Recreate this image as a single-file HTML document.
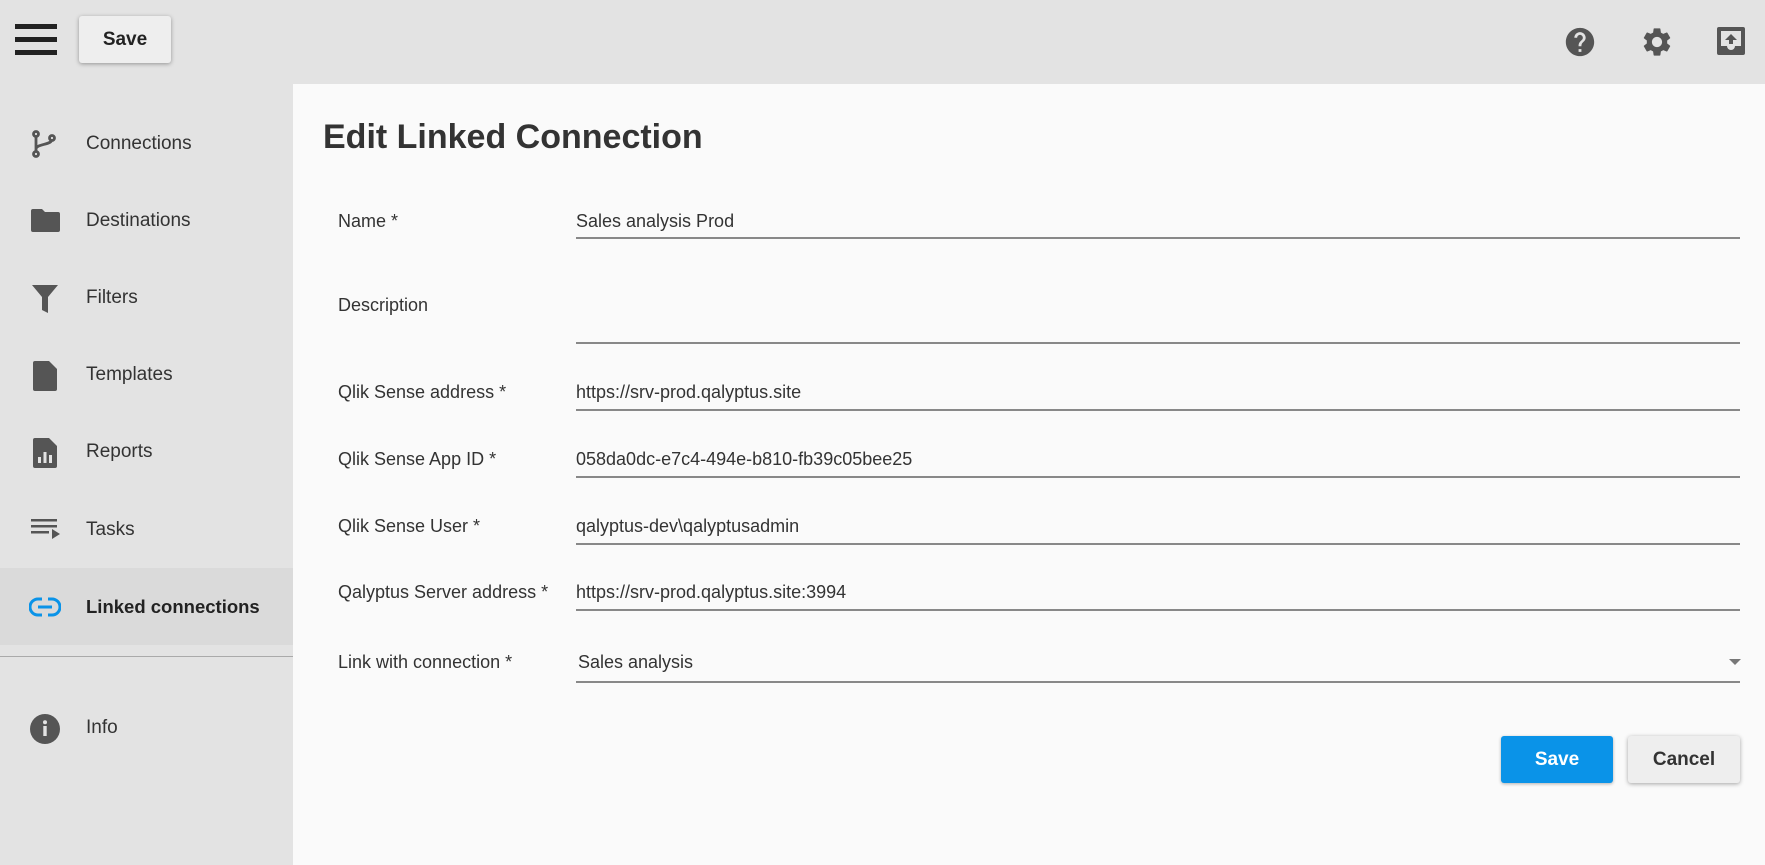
<!DOCTYPE html>
<html><head><meta charset="utf-8"><style>
*{margin:0;padding:0;box-sizing:border-box}
body{width:1765px;height:865px;position:relative;overflow:hidden;background:#fafafa;font-family:"Liberation Sans",Arial,sans-serif;color:#333}
.a{position:absolute}
.top{left:0;top:0;width:1765px;height:84px;background:#e3e3e3}
.side{left:0;top:84px;width:293px;height:781px;background:#e3e3e3}
.ham{left:15px;width:42px;height:5px;background:#222}
.btn{display:flex;align-items:center;justify-content:center;font-weight:bold;font-size:19px;border-radius:3px}
.nav{left:86px;font-size:19px;color:#333;line-height:22px}
.ic{left:29px}
.lbl{left:338px;font-size:18px;line-height:22px;color:#333}
.val{left:576px;font-size:18px;line-height:22px;color:#333}
.ul{left:576px;width:1164px;height:2px;background:#888}
</style></head><body>
<div class="a top"></div>
<div class="a side"></div>
<div class="a ham" style="top:24px"></div>
<div class="a ham" style="top:37px"></div>
<div class="a ham" style="top:50px"></div>
<div class="a btn" style="left:79px;top:16px;width:92px;height:47px;background:#eee;box-shadow:0 1px 4px rgba(0,0,0,.35);color:#222">Save</div>

<svg class="a" style="left:1563px;top:25px" width="34" height="34" viewBox="0 0 24 24"><path fill="#555" d="M12 2C6.480 2 2 6.48 2 12s4.48 10 10 10 10-4.48 10-10S17.52 2 12 2zm1 17h-2v-2h2v2zm2.07-7.75l-.9.92C13.45 12.9 13 13.5 13 15h-2v-.5c0-1.1.45-2.1 1.17-2.83l1.24-1.260c.37-.36.59-.86.59-1.41 0-1.1-.9-2-2-2s-2 .9-2 2H8c0-2.21 1.79-4 4-4s4 1.79 4 4c0 .88-.36 1.68-.93 2.25z"/></svg>
<svg class="a" style="left:1640px;top:25px" width="34" height="34" viewBox="0 0 24 24"><path fill="#555" d="M19.14 12.94c.04-.3.06-.61.06-.94 0-.32-.02-.64-.07-.94l2.03-1.58a.49.49 0 0 0 .12-.61l-1.92-3.32a.488.488 0 0 0-.59-.22l-2.39.96c-.5-.38-1.03-.7-1.62-.94l-.36-2.54a.484.484 0 0 0-.48-.41h-3.84c-.24 0-.43.17-.47.41l-.36 2.54c-.59.24-1.13.57-1.62.94l-2.390-.96c-.22-.08-.47 0-.59.22L2.74 8.87c-.12.21-.08.47.12.61l2.03 1.58c-.05.3-.09.63-.09.94s.02.64.07.94l-2.03 1.58a.49.49 0 0 0-.12.61l1.92 3.32c.12.22.37.29.59.22l2.39-.96c.5.38 1.03.7 1.62.94l.36 2.54c.05.24.24.41.48.41h3.84c.24 0 .44-.17.47-.41l.36-2.54c.59-.24 1.13-.56 1.62-.94l2.39.96c.22.08.47 0 .59-.22l1.92-3.32c.12-.22.07-.47-.12-.61l-2.01-1.58zM12 15.6c-1.98 0-3.6-1.62-3.6-3.6s1.62-3.6 3.6-3.6 3.6 1.62 3.6 3.6-1.62 3.6-3.6 3.6z"/></svg>
<svg class="a" style="left:1716px;top:26px" width="30" height="30" viewBox="0 0 30 30"><path fill="#555" d="M3 1h24a2 2 0 0 1 2 2v24a2 2 0 0 1-2 2H3a2 2 0 0 1-2-2V3a2 2 0 0 1 2-2zm2 4v15h6a4 4 0 0 0 8 0h6V5z"/><path fill="#555" d="M15 8l-6 6h4v4h4v-4h4z"/></svg>

<svg class="a ic" style="top:129px" width="30" height="30" viewBox="0 0 30 30"><g fill="none" stroke="#555" stroke-width="2.8"><circle cx="7" cy="5" r="2.5"/><circle cx="7" cy="25" r="2.5"/><circle cx="23" cy="9" r="2.5"/><path d="M7 7.5v15M7 20c0-5 14-4 15.5-8.5"/></g></svg>
<svg class="a ic" style="top:207px" width="32" height="28" viewBox="0 0 32 28"><path fill="#555" d="M2 4a2 2 0 0 1 2-2h9l3 3h13a2 2 0 0 1 2 2v16a2 2 0 0 1-2 2H4a2 2 0 0 1-2-2z"/></svg>
<svg class="a ic" style="top:284px" width="32" height="32" viewBox="0 0 32 32"><path fill="#555" d="M3 1h26l-10 12v16l-6-3V13z"/></svg>
<svg class="a ic" style="top:360px" width="32" height="32" viewBox="0 0 32 32"><path fill="#555" d="M6 1h14l8 8v20a2 2 0 0 1-2 2H6a2 2 0 0 1-2-2V3a2 2 0 0 1 2-2z"/></svg>
<svg class="a ic" style="top:437px" width="32" height="32" viewBox="0 0 32 32"><path fill="#555" d="M6 1h14l8 8v20a2 2 0 0 1-2 2H6a2 2 0 0 1-2-2V3a2 2 0 0 1 2-2z"/><g fill="#e3e3e3"><rect x="9" y="20" width="3" height="6"/><rect x="14.5" y="15" width="3" height="11"/><rect x="20" y="18" width="3" height="8"/></g></svg>
<svg class="a ic" style="top:517px" width="34" height="28" viewBox="0 0 34 28"><g fill="#555"><rect x="2" y="2" width="26" height="2.5"/><rect x="2" y="8" width="26" height="2.5"/><rect x="2" y="14" width="18" height="2.5"/><path d="M23 12l8 5-8 5z"/></g></svg>
<div class="a" style="left:0;top:568px;width:293px;height:77px;background:#dadada"></div>
<svg class="a ic" style="top:594px" width="32" height="26" viewBox="0 0 32 26"><g fill="none" stroke="#0a93e8" stroke-width="3"><path d="M13 5H9a8 8 0 0 0 0 16h4M19 5h4a8 8 0 0 1 0 16h-4M9 13h14"/></g></svg>
<div class="a" style="left:0;top:656px;width:293px;height:1px;background:#aaa"></div>
<svg class="a ic" style="top:713px" width="32" height="32" viewBox="0 0 32 32"><circle cx="16" cy="16" r="15" fill="#555"/><rect x="14.3" y="13" width="3.4" height="10" fill="#e3e3e3"/><circle cx="16" cy="9.2" r="2" fill="#e3e3e3"/></svg>

<div class="a nav" style="top:133px">Connections</div>
<div class="a nav" style="top:210px">Destinations</div>
<div class="a nav" style="top:287px">Filters</div>
<div class="a nav" style="top:364px">Templates</div>
<div class="a nav" style="top:441px">Reports</div>
<div class="a nav" style="top:519px">Tasks</div>
<div class="a nav" style="top:596px;font-weight:bold;color:#222;font-size:18.5px">Linked connections</div>
<div class="a nav" style="top:717px">Info</div>

<div class="a" style="left:323px;top:115px;font-size:34px;font-weight:bold;color:#333;line-height:44px">Edit Linked Connection</div>

<div class="a lbl" style="top:210px">Name *</div>
<div class="a val" style="top:210px">Sales analysis Prod</div>
<div class="a ul" style="top:237px"></div>
<div class="a lbl" style="top:294px">Description</div>
<div class="a ul" style="top:342px"></div>
<div class="a lbl" style="top:381px">Qlik Sense address *</div>
<div class="a val" style="top:381px">https://srv-prod.qalyptus.site</div>
<div class="a ul" style="top:409px"></div>
<div class="a lbl" style="top:448px">Qlik Sense App ID *</div>
<div class="a val" style="top:448px">058da0dc-e7c4-494e-b810-fb39c05bee25</div>
<div class="a ul" style="top:476px"></div>
<div class="a lbl" style="top:515px">Qlik Sense User *</div>
<div class="a val" style="top:515px">qalyptus-dev\qalyptusadmin</div>
<div class="a ul" style="top:543px"></div>
<div class="a lbl" style="top:581px">Qalyptus Server address *</div>
<div class="a val" style="top:581px">https://srv-prod.qalyptus.site:3994</div>
<div class="a ul" style="top:609px"></div>
<div class="a lbl" style="top:651px">Link with connection *</div>
<div class="a val" style="top:651px;left:578px">Sales analysis</div>
<div class="a" style="left:1729px;top:659px;width:0;height:0;border-left:6px solid transparent;border-right:6px solid transparent;border-top:6px solid #777"></div>
<div class="a ul" style="top:681px"></div>

<div class="a btn" style="left:1501px;top:736px;width:112px;height:47px;background:#0a93e8;color:#fff;box-shadow:0 1px 3px rgba(0,0,0,.3)">Save</div>
<div class="a btn" style="left:1628px;top:736px;width:112px;height:47px;background:#eee;color:#333;box-shadow:0 1px 4px rgba(0,0,0,.35)">Cancel</div>
</body></html>
